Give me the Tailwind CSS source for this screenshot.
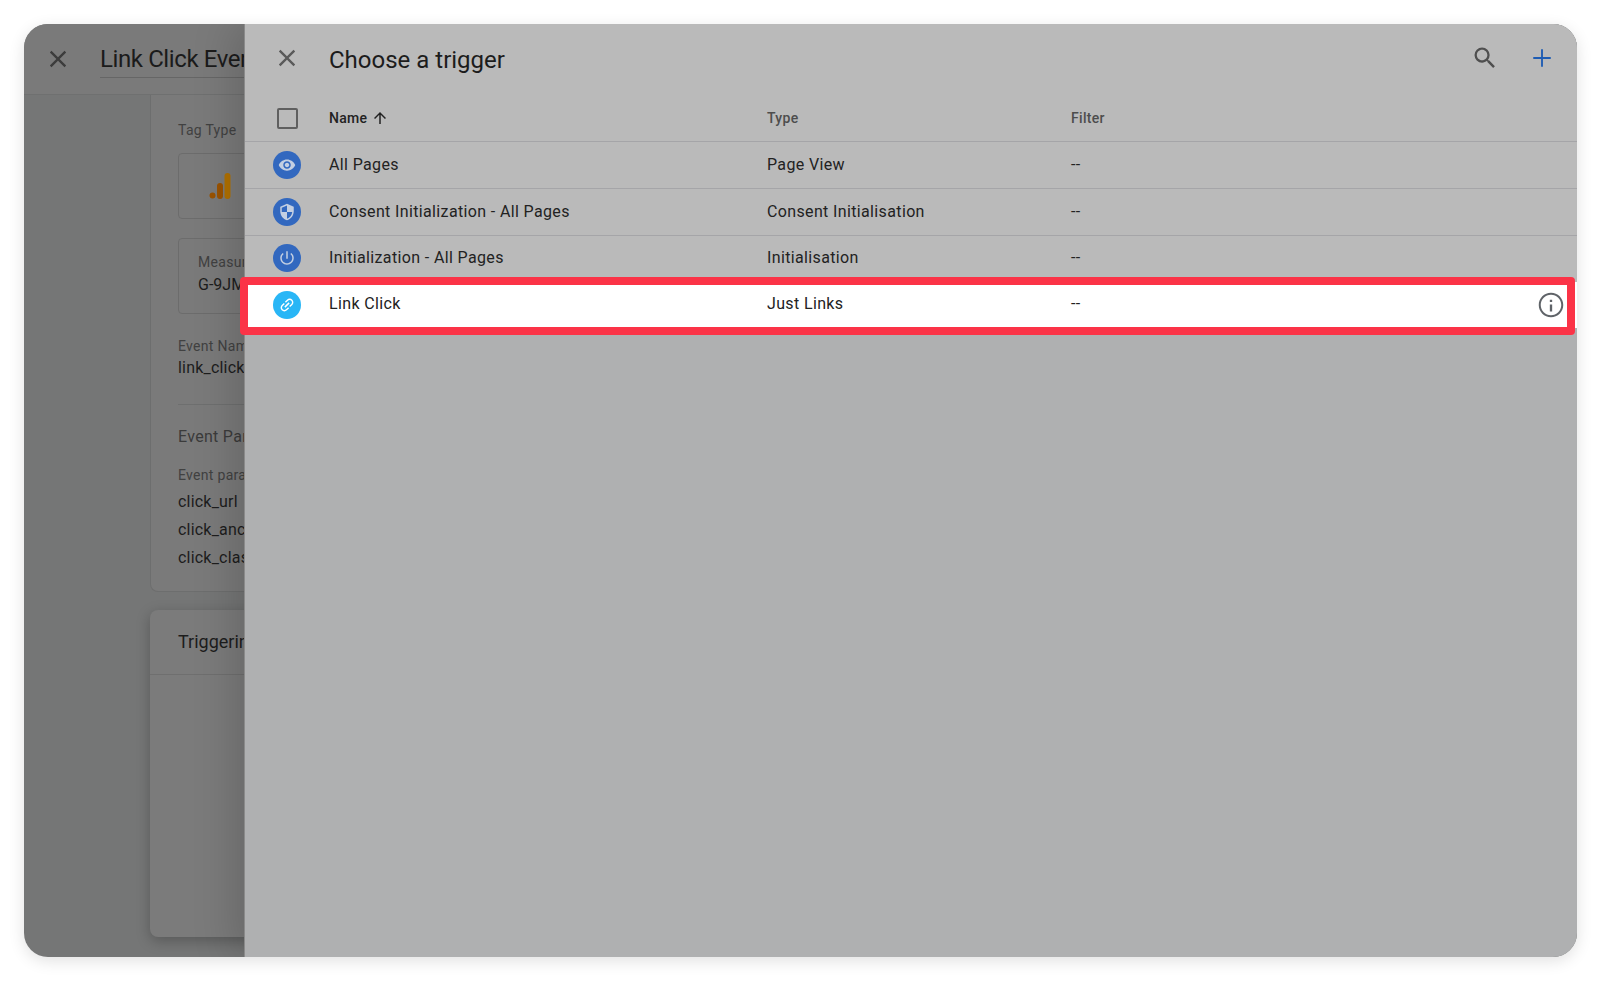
<!DOCTYPE html>
<html lang="en">
<head>
  <meta charset="UTF-8" />
  <title>Choose a trigger</title>
  <script src="https://cdn.jsdelivr.net/npm/@tailwindcss/browser@4"></script>
</head>
<body class="bg-white h-[981px] overflow-hidden font-['Roboto',sans-serif]">
  <div class="pt-6 pl-6">
    <div class="relative w-[1553px] h-[933px] rounded-[24px] overflow-hidden bg-[#757676] shadow-[0_4px_16px_rgba(0,0,0,0.12)]">

      <!-- Dimmed tag editor behind -->
      <div class="h-[71px] flex border-b border-[#6f7070] bg-[#7a7a7a]">
        <svg class="w-7 h-7 ml-[20px] mt-[21px] text-[#3c3c3c]" viewBox="0 0 24 24" fill="currentColor"><path d="M19 6.41 17.59 5 12 10.59 6.41 5 5 6.41 10.59 12 5 17.59 6.41 19 12 13.41 17.59 19 19 17.59 13.41 12z"/></svg>
        <div class="ml-[28px] mt-[17px] h-[37px] w-[200px] overflow-hidden border-b border-[#666] text-[24px] leading-[36px] tracking-[-0.4px] text-[#1b1b1b] whitespace-nowrap">Link Click Event</div>
      </div>
      <div class="ml-[126px] h-[497px] w-[300px] border-l border-b border-[#6d6e6e] rounded-bl-[8px] bg-[#7a7a7a] pl-[27px] text-[#1d1d1d]">
        <div class="pt-[26px] text-[14px] leading-[18px] tracking-[0.3px] text-[#414141]">Tag Type</div>
        <div class="mt-[14px] h-[66px] border border-[#6c6c6c] rounded-[4px] pl-[30px] pt-[19px]">
          <svg class="w-[24px] h-[27px]" viewBox="0 0 24 27"><rect x="15.5" y="0" width="6" height="26" rx="3" fill="#b07000"/><rect x="8" y="10" width="6" height="16" rx="3" fill="#9a5200"/><circle cx="3.5" cy="22.5" r="3" fill="#9a5200"/></svg>
        </div>
        <div class="mt-[19px] h-[76px] border border-[#6c6c6c] rounded-[4px] pl-[19px] pt-[14px]">
          <div class="text-[14px] leading-[18px] tracking-[0.3px] text-[#414141]">Measurement ID</div>
          <div class="mt-[4px] text-[16px] leading-[20px]">G-9JMXYZ12</div>
        </div>
        <div class="mt-[23px] text-[14px] leading-[18px] tracking-[0.3px] text-[#414141]">Event Name</div>
        <div class="mt-[2px] text-[16px] leading-[22px] tracking-[0.2px]">link_click</div>
        <div class="mt-[25px] border-t border-[#6e6f6f]"></div>
        <div class="mt-[21px] text-[16px] leading-[22px] tracking-[0.3px] text-[#3b3b3b]">Event Parameters</div>
        <div class="mt-[18px] text-[14px] leading-[18px] tracking-[0.3px] text-[#414141]">Event parameter</div>
        <div class="mt-[7px] text-[16px] leading-[22px] tracking-[0.2px]">click_url</div>
        <div class="mt-[6px] text-[16px] leading-[22px] tracking-[0.2px]">click_anchor</div>
        <div class="mt-[6px] text-[16px] leading-[22px] tracking-[0.2px]">click_class</div>
      </div>
      <div class="ml-[126px] mt-[18px] h-[327px] w-[300px] rounded-[8px] bg-[#7b7b7b] shadow-[0_4px_14px_rgba(0,0,0,0.25)]">
        <div class="h-[65px] border-b border-[#6f6f6f] pl-[28px] pt-[19px] text-[18px] leading-[26px] text-[#1d1d1d] whitespace-nowrap">Triggering</div>
      </div>

      <!-- Trigger picker sheet -->
      <div class="absolute top-0 bottom-0 left-[220px] right-0 border-l border-[#8a8a8a] bg-[#afb0b1] shadow-[-10px_0_40px_rgba(0,0,0,0.16)]">
        <div class="bg-[#bababa]">
          <div class="h-[71px] flex items-center">
            <svg class="w-7 h-7 ml-[28px] -mt-[3px] text-[#5a5a5a]" viewBox="0 0 24 24" fill="currentColor"><path d="M19 6.41 17.59 5 12 10.59 6.41 5 5 6.41 10.59 12 5 17.59 6.41 19 12 13.41 17.59 19 19 17.59 13.41 12z"/></svg>
            <div class="ml-[28px] text-[24px] leading-[30px] text-[#1c1c1c]">Choose a trigger</div>
            <svg class="w-7 h-7 ml-auto -mt-[4px] text-[#4f4f4f]" viewBox="0 0 24 24" fill="currentColor"><path d="M15.5 14h-.79l-.28-.27A6.471 6.471 0 0 0 16 9.5 6.5 6.5 0 1 0 9.5 16c1.61 0 3.09-.59 4.23-1.57l.27.28v.79l5 4.99L20.49 19l-4.99-5zm-6 0C7.01 14 5 11.99 5 9.5S7.01 5 9.5 5 14 7.01 14 9.5 11.99 14 9.5 14z"/></svg>
            <svg class="w-7 h-7 ml-[29px] mr-[21px] -mt-[3px] text-[#1e5cb3]" viewBox="0 0 24 24" fill="currentColor"><path d="M19.5 12.8h-6.7v6.7h-1.6v-6.7H4.5v-1.6h6.7V4.5h1.6v6.7h6.7z"/></svg>
          </div>
          <div class="h-[47px] flex items-center border-b border-[#a5a5a8] text-[14px] font-medium tracking-[0.3px] text-[#222]">
            <div class="w-[21px] h-[21px] ml-[32px] mr-[31px] mt-[1px] border-2 border-[#5f5f5f] rounded-[2px]"></div>
            <div class="w-[438px] flex items-center mt-[1px]">Name
              <svg class="w-[18px] h-[18px] ml-[4px] -mt-[1px]" viewBox="0 0 24 24" fill="currentColor"><path d="M4 12l1.41 1.41L11 7.83V20h2V7.83l5.58 5.59L20 12l-8-8-8 8z"/></svg>
            </div>
            <div class="w-[304px] mt-[1px] text-[#4d4d4d]">Type</div>
            <div class="mt-[1px] text-[#4d4d4d]">Filter</div>
          </div>

          <div class="h-[47px] flex items-center border-b border-[#a5a5a8] text-[16px] tracking-[0.36px] text-[#222]">
            <div class="w-7 h-7 ml-[28px] mr-[28px] rounded-full bg-[#3268bf] flex items-center justify-center">
              <svg class="w-[18px] h-[18px] text-[#c3cfe2]" viewBox="0 0 24 24" fill="currentColor"><path d="M12 4.5C7 4.5 2.73 7.61 1 12c1.73 4.39 6 7.5 11 7.5s9.27-3.11 11-7.5c-1.73-4.39-6-7.5-11-7.5zM12 17c-2.76 0-5-2.24-5-5s2.24-5 5-5 5 2.24 5 5-2.24 5-5 5zm0-8c-1.66 0-3 1.34-3 3s1.34 3 3 3 3-1.34 3-3-1.34-3-3-3z"/></svg>
            </div>
            <div class="w-[438px] -mt-[1px]">All Pages</div>
            <div class="w-[304px] -mt-[1px]">Page View</div>
            <div class="-mt-[1px]">--</div>
          </div>
          <div class="h-[47px] flex items-center border-b border-[#a5a5a8] text-[16px] tracking-[0.36px] text-[#222]">
            <div class="w-7 h-7 ml-[28px] mr-[28px] rounded-full bg-[#3268bf] flex items-center justify-center">
              <svg class="w-[18px] h-[18px] text-[#c3cfe2]" viewBox="0 0 24 24" fill="currentColor"><path d="M12 1 3 5v6c0 5.55 3.84 10.74 9 12 5.16-1.26 9-6.45 9-12V5l-9-4zm0 10.99h7c-.53 4.12-3.28 7.79-7 8.94V12H5V6.3l7-3.11v8.8z"/></svg>
            </div>
            <div class="w-[438px] -mt-[1px]">Consent Initialization - All Pages</div>
            <div class="w-[304px] -mt-[1px]">Consent Initialisation</div>
            <div class="-mt-[1px]">--</div>
          </div>
          <div class="h-[46px] flex items-center text-[16px] tracking-[0.36px] text-[#222]">
            <div class="w-7 h-7 ml-[28px] mr-[28px] -mt-[2px] rounded-full bg-[#3268bf] flex items-center justify-center">
              <svg class="w-[18px] h-[18px] text-[#c3cfe2]" viewBox="0 0 24 24" fill="currentColor"><path d="M13 3h-2v10h2V3zm4.83 2.17-1.42 1.42C17.99 7.86 19 9.81 19 12c0 3.87-3.13 7-7 7s-7-3.13-7-7c0-2.19 1.01-4.14 2.58-5.42L6.17 5.17C4.23 6.82 3 9.26 3 12c0 4.97 4.03 9 9 9s9-4.03 9-9c0-2.74-1.23-5.18-3.17-6.83z"/></svg>
            </div>
            <div class="w-[438px] -mt-[2px]">Initialization - All Pages</div>
            <div class="w-[304px] -mt-[2px]">Initialisation</div>
            <div class="-mt-[2px]">--</div>
          </div>
        </div>
        <div class="h-[46px] flex items-center bg-white text-[16px] tracking-[0.36px] text-[#222]">
          <div class="w-7 h-7 ml-[28px] mr-[28px] rounded-full bg-[#29b6f6] flex items-center justify-center">
            <svg class="w-[18px] h-[18px] text-white -rotate-45" viewBox="0 0 24 24" fill="currentColor"><path d="M3.9 12c0-1.71 1.39-3.1 3.1-3.1h4V7H7c-2.76 0-5 2.24-5 5s2.24 5 5 5h4v-1.9H7c-1.71 0-3.1-1.39-3.1-3.1zM8 13h8v-2H8v2zm9-6h-4v1.9h4c1.71 0 3.1 1.39 3.1 3.1s-1.39 3.1-3.1 3.1h-4V17h4c2.76 0 5-2.24 5-5s-2.24-5-5-5z"/></svg>
          </div>
          <div class="w-[438px] -mt-[2px]">Link Click</div>
          <div class="w-[304px] -mt-[2px]">Just Links</div>
          <div class="-mt-[2px]">--</div>
          <svg class="w-7 h-7 ml-auto mr-[12px] text-[#5f6368]" viewBox="0 0 24 24" fill="currentColor"><path d="M11 7.5h2v2h-2zm0 4h2v6h-2zM12 1.5C6.2 1.5 1.5 6.2 1.5 12S6.2 22.5 12 22.5 22.5 17.8 22.5 12 17.8 1.5 12 1.5zm0 19.3c-4.86 0-8.8-3.94-8.8-8.8S7.14 3.2 12 3.2s8.8 3.94 8.8 8.8-3.94 8.8-8.8 8.8z"/></svg>
        </div>
      </div>

      <!-- Red highlight around the Link Click row -->
      <div class="absolute left-[216px] top-[253px] w-[1335px] h-[58px] border-[8px] border-[#fb3347] rounded-[4px]"></div>
    </div>
  </div>
</body>
</html>
